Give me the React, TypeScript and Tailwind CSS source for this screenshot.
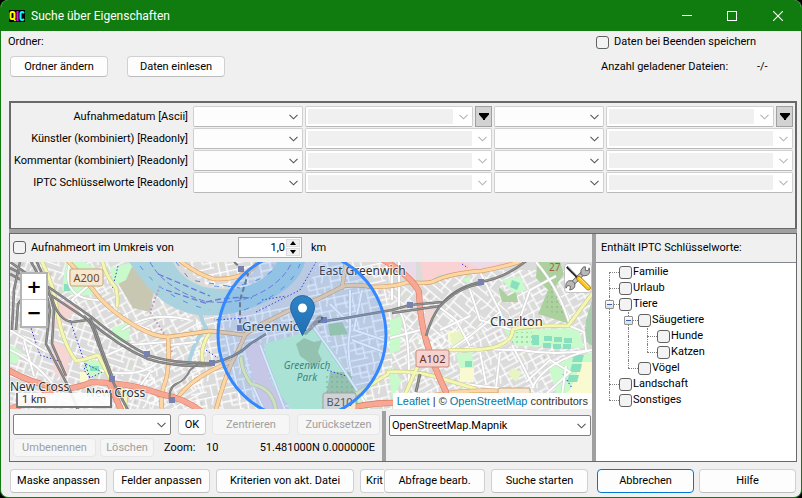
import type { ReactNode } from 'react';

const btn =
  'flex items-center justify-center rounded-[4px] border border-[#d0d0d0] border-b-[#bdbdbd] bg-[#fdfdfd] whitespace-nowrap';
const btnOff =
  'flex items-center justify-center rounded-[4px] border border-[#e6e6e6] bg-[#f6f6f6] text-[#a0a0a0] whitespace-nowrap';
const check =
  'size-[13px] shrink-0 appearance-none rounded-[3px] border border-[#626262] bg-[#f3f3f3]';

function Chevron({ muted = false }: { muted?: boolean }) {
  return (
    <svg
      viewBox="0 0 9 6"
      className="pointer-events-none absolute top-1/2 right-[4px] h-[6px] w-[9px] -translate-y-1/2"
      fill="none"
      stroke={muted ? '#b4b4b4' : '#555'}
      strokeWidth="1.1"
    >
      <path d="M.5 .8 4.5 4.8 8.5 .8" />
    </svg>
  );
}

function Combo({ label, muted = false }: { label: string; muted?: boolean }) {
  return (
    <div className="relative h-[21px] min-w-0 flex-1 overflow-hidden rounded-[2px] border border-[#d0d0d0] border-b-[#b8b8b8] bg-white">
      <select
        aria-label={label}
        disabled={muted}
        className={
          muted
            ? 'block size-full appearance-none border-2 border-r-[19px] border-white bg-[#f0f0f0] opacity-100'
            : 'block size-full appearance-none bg-[#fdfdfd]'
        }
      />
      <Chevron muted={muted} />
    </div>
  );
}

function DateButton({ label }: { label: string }) {
  return (
    <button
      aria-label={label}
      className="flex h-[21px] w-[17px] items-center justify-center border border-[#a0a0a0] bg-[#d2d2d2]"
    >
      <svg viewBox="0 0 10 7" className="h-[7px] w-[10px]">
        <path d="M0 0h10v1.500L6 6v1H4V6L0 1.500z" />
      </svg>
    </button>
  );
}

const fields = [
  'Aufnahmedatum [Ascii]',
  'Künstler (kombiniert) [Readonly]',
  'Kommentar (kombiniert) [Readonly]',
  'IPTC Schlüsselworte [Readonly]',
];

type Cell = 'first' | 'tee' | 'end' | 'line' | 'minus';
const tree: { name: string; cells: Cell[] }[] = [
  { name: 'Familie', cells: ['first'] },
  { name: 'Urlaub', cells: ['tee'] },
  { name: 'Tiere', cells: ['minus'] },
  { name: 'Säugetiere', cells: ['line', 'minus'] },
  { name: 'Hunde', cells: ['line', 'line', 'tee'] },
  { name: 'Katzen', cells: ['line', 'line', 'end'] },
  { name: 'Vögel', cells: ['line', 'end'] },
  { name: 'Landschaft', cells: ['tee'] },
  { name: 'Sonstiges', cells: ['end'] },
];

function TreeCell({ kind }: { kind: Cell }) {
  return (
    <span className="relative h-4 w-[19px] shrink-0">
      {kind !== 'first' && <i className="absolute top-0 left-[9px] h-2 border-l border-dotted border-[#808080]" />}
      {kind !== 'end' && <i className="absolute top-2 left-[9px] h-2 border-l border-dotted border-[#808080]" />}
      {kind !== 'line' && (
        <i className="absolute top-2 left-[9px] w-[10px] border-t border-dotted border-[#808080]" />
      )}
      {kind === 'minus' && (
        <button
          aria-label="Zuklappen"
          className="absolute top-[4px] left-[5px] flex size-[9px] items-center justify-center rounded-[1px] border border-[#919191] bg-linear-to-b from-white to-[#dcdcdc]"
        >
          <i className="h-px w-[5px] bg-[#3c5fb4]" />
        </button>
      )}
    </span>
  );
}

const rail = (d: string, w = 2.6) => (
  <g key={d} fill="none">
    <path d={d} stroke="#777" strokeWidth={w} />
    <path d={d} stroke="#b5b5b5" strokeWidth={w / 5} />
  </g>
);

function Roads({ paths, edge, fill, width }: { paths: string[]; edge: string; fill: string; width: number }) {
  return (
    <g fill="none" strokeLinecap="round" strokeLinejoin="round">
      {paths.map((d) => (
        <path key={'e' + d} d={d} stroke={edge} strokeWidth={width + 1.2} />
      ))}
      {paths.map((d) => (
        <path key={'f' + d} d={d} stroke={fill} strokeWidth={width} />
      ))}
    </g>
  );
}

function Streets({ id, angle, w, h }: { id: string; angle: number; w: number; h: number }) {
  return (
    <pattern id={id} width={w * 3} height={h * 3} patternUnits="userSpaceOnUse" patternTransform={`rotate(${angle})`}>
      <path
        d={`M0 .7H${w * 3}M0 ${h}H${w * 1.7}M${w} ${h * 1.6}H${w * 3}M0 ${h * 2.3}H${w * 2}M1 0V${h * 3}M${w} 0V${h * 1.6}M${w * 1.7} 0V${h * 2.3}M${w * 2.4} ${h * 1.6}V${h * 3}M${w * 2.5} 0l-3 ${h}`}
        stroke="#fff"
        strokeWidth="1.300"
        fill="none"
      />
      <rect x={w * 1.2} y={h * 0.4} width="2" height="2.500" fill="#d4c6c0" />
      <rect x={w * 2.6} y={h * 2} width="3" height="2" fill="#cfe6c0" />
    </pattern>
  );
}

const majorRoads = [
  'M66 259Q82 275 90 286Q108 311 137 327Q155 337 168 337L210 331Q230 333 244 335L262 324L292 309L318 299L344 286Q360 284 372 287Q396 287 408 282Q422 284 432 282Q450 273 482 271Q508 266 528 259',
  'M168 337Q170 362 166 380Q160 394 162 410',
  'M245 335Q238 352 232 362Q224 380 216 410',
  'M178 259Q196 274 214 279Q246 280 258 262',
  'M176 400Q190 378 230 362',
  'M342 288L346 262',
  'M430 396Q470 388 520 392L534 410',
];
const yellowRoads = [
  'M40 258Q54 284 57 310Q62 342 76 361Q84 360 98 355L112 382L124 392Q128 402 122 412',
  'M102 258Q104 274 116 288Q118 298 117 306',
  'M418 366Q410 382 398 412M388 372Q420 370 450 381L476 389',
  'M450 350Q492 351 502 344Q512 340 513 329Q530 325 568 326L592 294',
  'M210 332Q198 350 204 366',
  'M241 358Q242 372 251 384Q274 388 276 412',
  'M340 404Q372 384 388 374',
];
const redRoads = [
  'M8 370Q28 382 60 389Q76 389 92 382Q132 383 160 394Q184 398 202 412',
  'M8 410Q30 402 50 392',
  'M110 385L122 412',
  'M380 258Q412 276 419 292Q420 320 426 340Q434 368 446 392',
  'M336 412Q366 402 398 403',
];
const localRoads = [
  'M70 262Q60 300 100 300Q120 320 150 330',
  'M88 286L72 300L84 316M96 360L130 345L166 342M100 370Q140 380 160 360',
  'M122 330Q150 310 190 320M170 345L196 342M130 400L150 372',
  'M312 325Q330 350 345 372L370 410M350 290V330Q346 352 352 374',
  'M362 290L354 330L384 340M330 304L348 322M352 340L384 352',
  'M392 262V300M399 262V310Q412 330 408 410M390 338L420 330',
  'M480 272L500 312L506 328M512 345L520 360L534 388M450 350L470 336L500 312',
  'M430 300L456 320L470 346M470 290L480 320L512 330M440 330L470 316',
  'M470 348Q500 350 520 350Q556 356 592 350M532 388Q546 360 592 350',
  'M536 262Q560 290 570 326L584 332L586 350M556 276L530 290L520 318',
  'M430 352L436 380L480 386L530 392M480 352L486 384M500 352L496 388',
  'M526 382L550 360L570 372L545 395L526 410M560 410L566 366',
  'M260 345L285 410M236 350L264 410M226 336L240 400',
  'M10 350Q40 364 60 394M24 340L34 376M10 330L46 352',
];
const stations = [
  [147, 354], [112, 379], [172, 400], [241, 269], [240, 328], [212, 363], [324, 320], [410, 305], [481, 282],
];
const lawns = [
  'M66 262H84L102 272L94 284L98 294L76 296L62 290Z',
  'M110 268L134 262L126 280L114 286Z',
  'M84 362L102 358L104 374L86 376Z',
  'M112 328L128 322L130 340L114 342Z',
  'M10 345L22 352L16 364L10 362Z',
  'M502 280L520 276L526 290L514 294Z',
  'M504 330L578 328L584 348L516 346Z',
  'M548 366L592 352V404L562 410Z',
  'M456 354L472 352L474 370L460 368Z',
  'M390 320L402 316L400 350L390 354Z',
  'M388 366L402 380L392 400Z',
  'M462 280L470 276L470 284Z',
  'M264 344L313 330L326 340L350 376L372 410H292L272 384Z',
];
const pitches = [
  'M64 284h6v7h-6z', 'M90 366h9v5h-9z', 'M512 280l8 3-3 7-7-3z', 'M532 335h7v10h-7z',
  'M544 336h8v5h-8zM554 337h8v5h-8zM564 338h8v5h-8zM543 343h8v5h-8zM553 344h8v5h-8zM563 344h8v5h-8z',
  'M574 355h10l-2 7h-10zM572 364h10l-2 8h-10zM569 375h10l-2 7h-10z', 'M465 361h7v6h-7z',
];

function MapLabel({ x, y, size = 13, children }: { x: number; y: number; size?: number; children: ReactNode }) {
  return (
    <text x={x} y={y} fontSize={size} fill="#333" stroke="#fff" strokeOpacity=".7" strokeWidth="2" paintOrder="stroke">
      {children}
    </text>
  );
}

function Shield({ x, y, text, red = false }: { x: number; y: number; text: string; red?: boolean }) {
  return (
    <g>
      <rect
        x={x}
        y={y}
        width="33"
        height="17"
        rx="2"
        fill={red ? '#f6d3cd' : '#f6e7d0'}
        stroke={red ? '#c98b80' : '#c9a57c'}
      />
      <text x={x + 16.5} y={y + 12.5} fontSize="11" textAnchor="middle" fill={red ? '#70342a' : '#6d4a22'}>
        {text}
      </text>
    </g>
  );
}

function CityMap() {
  return (
    <svg
      viewBox="10 262 582 147"
      preserveAspectRatio="xMidYMid slice"
      className="block size-full font-['Noto_Sans',sans-serif]"
      role="img"
      aria-label="Karte von Greenwich"
    >
      <defs>
        <Streets id="streetsA" angle={-28} w={10} h={7} />
        <Streets id="streetsB" angle={18} w={10} h={8} />
        <Streets id="streetsC" angle={-12} w={11} h={8} />
        <Streets id="streetsD" angle={40} w={12} h={9} />
        <pattern id="trees" width="5" height="5" patternUnits="userSpaceOnUse">
          <circle cx="2" cy="2" r=".8" fill="#7fae74" />
        </pattern>
        <linearGradient id="pin" x1="0" y1="0" x2="0" y2="1">
          <stop offset="0" stopColor="#2f84c6" />
          <stop offset="1" stopColor="#1f6fb3" />
        </linearGradient>
      </defs>
      <rect x="10" y="262" width="582" height="147" fill="#dcdbdb" />
      <path d="M10 262H70L60 300L150 350L160 410H10Z" fill="url(#streetsB)" />
      <path d="M70 262H130L210 330L200 410H150L140 350L60 300Z" fill="url(#streetsA)" />
      <path d="M196 320L300 300L320 262H392V410H190Z" fill="url(#streetsC)" />
      <path d="M386 286L500 270L510 320L450 350L400 340Z" fill="url(#streetsD)" />
      <path d="M392 340L510 320L500 270H592V410H392Z" fill="url(#streetsA)" />
      <path d="M176 262H280L262 280L240 289L208 286Z" fill="url(#streetsC)" />

      <path d="M116 280L131 266L155 285L150 312L133 308Z" fill="#c7c7b2" />
      <path d="M58 300L84 308L96 300L70 316L54 330ZM52 340L70 350L66 382L54 372Z" fill="#f7d5d2" />
      <path d="M420 262H520L476 271L440 274L424 284Z" fill="#fad2d3" />
      <path d="M462 262H506L480 268ZM400 262H416V280L404 272Z" fill="#ebdbe8" />
      <path d="M426 308L438 310L428 330L424 320Z" fill="#f2d8d5" />
      <path d="M245 346L262 342L270 380L286 410H262Z" fill="#ecd6e2" />
      <g fill="#c8facc">
        {lawns.map((d) => (
          <path key={d} d={d} />
        ))}
      </g>
      <path d="M582 362H592V410H556Q558 398 570 390ZM460 368H474V382H460ZM80 372H88V382H80ZM448 332H458V342H448Z" fill="#f9f9d2" />
      <path d="M450 334L464 330L464 342L452 346ZM512 368L522 372L516 382L508 374Z" fill="#e6f5c3" />
      <path d="M586 320L592 300V346L584 340Z" fill="#a9cfae" />
      <path
        d="M537 262H560L564 274L553 290L570 324L538 314L548 290L536 278ZM498 286L508 296L516 292L518 302L502 302ZM296 344L304 338L314 342L322 340L318 352L322 360L314 366L300 356ZM328 324L342 322L348 334L330 336ZM330 372L350 372L360 410H324Z"
        fill="#add19e"
      />
      <path d="M324 376H352L358 410H322ZM512 332H532V346H512ZM548 286L556 284L566 318L546 310Z" fill="url(#trees)" />
      <g fill="#88e0be">
        {pitches.map((d) => (
          <path key={d} d={d} />
        ))}
      </g>

      <path
        d="M129 262H173Q182 280 204 287Q240 294 262 279Q272 272 277 262H305Q300 282 274 297Q246 314 216 315Q188 318 164 302Q146 288 129 262Z"
        fill="#aad3df"
      />
      <path d="M198 306Q202 322 206 328Q194 340 188 366" fill="none" stroke="#aad3df" strokeWidth="4" />
      <g fill="none" stroke="#6d78d8" strokeWidth="1" strokeDasharray="6 3">
        <path d="M150 262Q164 288 204 301Q236 306 262 292Q284 280 292 262" />
        <path d="M158 274L210 296M166 290L208 304M206 302Q230 296 252 298" strokeWidth="1.300" />
      </g>
      <g fill="none" stroke="#4f8fea" strokeWidth="1" strokeDasharray="5 9">
        <path d="M140 266Q166 300 210 310M176 262L190 280L240 288M214 286Q250 290 276 268M244 310Q290 292 300 264" />
      </g>
      <g fill="none" stroke="#3333dd" strokeWidth="1" strokeDasharray="1.5 2">
        <path d="M30 325L40 355L62 362M70 320L92 384M86 364L102 372L90 378L84 370ZM118 266L112 290M256 312L300 290L316 262M246 318L214 320M262 300L286 296M327 370L346 376M563 374L572 388M462 264L468 268M206 350L218 358" />
      </g>
      <path d="M160 286L150 312L168 340L172 352" fill="none" stroke="#b7a1bd" strokeWidth="2" strokeDasharray="2 2" />

      <g fill="none" stroke="#cdcdcd" strokeWidth="3">
        {localRoads.map((d) => (
          <path key={d} d={d} />
        ))}
      </g>
      <g fill="none" stroke="#fff" strokeWidth="2">
        {localRoads.map((d) => (
          <path key={d} d={d} />
        ))}
      </g>
      <Roads paths={yellowRoads} edge="#c9ca82" fill="#f4f7b4" width={3} />
      <Roads paths={majorRoads} edge="#d5a066" fill="#fcd6a4" width={3.2} />
      <Roads paths={redRoads} edge="#dd7a66" fill="#f7a894" width={5} />

      {[
        'M10 268L50 288L90 316Q124 344 150 356Q176 364 212 363Q236 358 250 344L266 334',
        'M10 274L52 296L88 320Q118 346 148 359Q176 368 212 365',
        'M30 260Q46 286 50 310L46 344L68 386L78 410',
        'M36 260Q50 290 54 310L52 344L66 376',
        'M20 262L14 290L12 330M10 262L36 280L18 304L16 330',
        'M52 298Q58 320 72 322L88 320',
        'M84 316Q92 322 96 338L112 380L128 410',
        'M90 318Q96 330 102 350L112 376',
        'M318 322L346 318L392 310L410 305L442 302',
        'M392 313L440 306Q454 288 480 282Q506 278 530 258',
        'M426 336Q432 316 440 306Q460 286 482 284',
      ].map((d) => rail(d))}
      {rail('M170 402Q168 388 176 384Q186 380 190 370L200 362', 2)}
      {rail('M420 374L416 392', 3)}
      <path d="M234 262L248 274L240 300V330" fill="none" stroke="#777" strokeWidth="2" strokeDasharray="5 3" />
      <g fill="#7981b0">
        {stations.map(([x, y]) => (
          <rect key={`${x}-${y}`} x={x - 3} y={y - 3} width="6" height="6" />
        ))}
      </g>

      <MapLabel x={10} y={391} size={12}>New Cross</MapLabel>
      <MapLabel x={86} y={397} size={12}>New Cross</MapLabel>
      <MapLabel x={242} y={331}>Greenwich</MapLabel>
      <MapLabel x={319} y={275} size={12}>East Greenwich</MapLabel>
      <MapLabel x={490} y={326}>Charlton</MapLabel>
      <g fontSize="10" fontStyle="italic" fill="#3c8560" textAnchor="middle">
        <text x="307" y="369">Greenwich</text>
        <text x="307" y="381">Park</text>
      </g>
      <text x="549" y="271" fontSize="10" fill="#a06048">27</text>
      <Shield x={70} y={269} text="A200" />
      <Shield x={416} y={350} text="A102" red />
      <Shield x={323} y={393} text="B210" />
      <rect x="498" y="388" width="32" height="8" rx="2" fill="#f6e7d0" stroke="#c9a57c" />

      <circle cx="302" cy="335" r="84" fill="#38f" fillOpacity=".2" stroke="#38f" strokeWidth="3" />
      <path d="M303 334L318 316Q326 314 322 320L306 335Z" fill="#000" opacity=".25" />
      <path
        d="M302.500 335.500L292.500 315Q290.500 311 290.500 307.500A12 12 0 0 1 314.500 307.500Q314.500 311 312.500 315Z"
        fill="url(#pin)"
        stroke="#2568a5"
      />
      <circle cx="302.500" cy="308" r="4.500" fill="#fff" />
    </svg>
  );
}

function ToolsIcon() {
  return (
    <svg viewBox="0 0 28 28" className="size-[26px] shrink-0">
      <path d="M6 22L20 8" stroke="#555" strokeWidth="5" />
      <path d="M6 22L20 8" stroke="#c4c4c4" strokeWidth="3.400" />
      <path
        d="M17 10Q16 5 20 2L22 2L22 6L25 6L26 3Q28 9 24 11Q20 13 17 10ZM10 19Q12 24 8 26L5 27L6 23L3 22L1 25Q0 19 4 17Q8 16 10 19Z"
        fill="#b8b8b8"
        stroke="#555"
        strokeWidth=".9"
      />
      <path d="M2 2L15 15" stroke="#222" strokeWidth="2.400" />
      <path d="M3 2L15 14" stroke="#ccc" strokeWidth=".6" />
      <path d="M15 14.500L25 24.500" stroke="#b07800" strokeWidth="5.500" strokeLinecap="round" />
      <path d="M15 14.500L25 24.500" stroke="#ffc61e" strokeWidth="4" strokeLinecap="round" />
      <path d="M16 14L25.500 23.500" stroke="#fff0a0" strokeWidth="1" />
    </svg>
  );
}

export default function App() {
  return (
    <div className="min-h-screen w-full bg-black font-['Roboto','Liberation_Sans',sans-serif] text-[11px] leading-[14px] text-black">
      <div className="flex min-h-screen flex-col overflow-hidden rounded-[8px] border-x border-b border-[#107c10] bg-[#f0f0f0]">
        <header className="flex h-[31px] items-center bg-[#107c10] pl-2 text-white">
          <svg viewBox="0 0 16 12" className="h-[12px] w-[16px]" fill="none" strokeWidth="2" role="img" aria-label="QIC">
            <rect width="16" height="12" fill="#000" />
            <rect x="1.500" y="2" width="4" height="7" rx="1.500" stroke="#ff0" />
            <path d="M4 8L6.500 11" stroke="#ff0" strokeWidth="1.500" />
            <path d="M8.500 1V11" stroke="#f0f" />
            <path d="M15 3Q14 2 13 2Q11.500 2 11.500 4V8Q11.500 10 13 10Q14 10 15 9" stroke="#0ff" />
          </svg>
          <h1 className="ml-[6px] flex-1 text-[12px]">Suche über Eigenschaften</h1>
          <button aria-label="Minimieren" className="flex h-full w-[45px] items-center justify-center">
            <i className="h-px w-[10px] bg-white" />
          </button>
          <button aria-label="Maximieren" className="flex h-full w-[46px] items-center justify-center">
            <i className="size-[10px] border border-white" />
          </button>
          <button aria-label="Schließen" className="flex h-full w-[46px] items-center justify-center">
            <svg viewBox="0 0 10 10" className="size-[10px]" stroke="#fff" strokeWidth="1.100">
              <path d="M0 0 10 10M10 0 0 10" />
            </svg>
          </button>
        </header>

        <main className="flex flex-1 flex-col pr-1 pl-2">
          <section className="flex h-[70px] justify-between pt-1">
            <div>
              <p className="-ml-px">Ordner:</p>
              <div className="mt-[7px] ml-px flex gap-[19px]">
                <button className={`${btn} h-[21px] w-[98px]`}>Ordner ändern</button>
                <button className={`${btn} h-[21px] w-[98px]`}>Daten einlesen</button>
              </div>
            </div>
            <div className="w-[201px]">
              <label className="flex items-center gap-[5px]">
                <input type="checkbox" className={check} />
                Daten bei Beenden speichern
              </label>
              <p className="mt-[11px] ml-[5px] flex">
                <span className="w-[156px]">Anzahl geladener Dateien:</span>
                <span>-/-</span>
              </p>
            </div>
          </section>

          <section className="h-[128px] border-2 border-b border-[#696969] pt-[3px] pr-[2px]">
            <div className="flex flex-col gap-px">
              {fields.map((name, i) => (
                <div key={name} className="grid grid-cols-[180px_110px_1fr_110px_1fr] items-center gap-x-[2px]">
                  <span className="pr-[3px] text-right whitespace-nowrap">{name}</span>
                  <Combo label={`${name} Operator 1`} />
                  <div className="flex gap-[2px]">
                    <Combo label={`${name} Wert 1`} muted />
                    {i === 0 && <DateButton label="Datum 1 wählen" />}
                  </div>
                  <Combo label={`${name} Operator 2`} />
                  <div className="flex gap-[2px]">
                    <Combo label={`${name} Wert 2`} muted />
                    {i === 0 && <DateButton label="Datum 2 wählen" />}
                  </div>
                </div>
              ))}
            </div>
          </section>
          <div className="h-1 bg-[#a0a0a0]" />

          <section className="flex border border-[#696969]">
            <div className="min-w-0 flex-1">
              <div className="flex h-[28px] items-center pb-px pl-[3px]">
                <label className="flex w-[225px] items-center gap-[5px]">
                  <input type="checkbox" className={check} />
                  Aufnahmeort im Umkreis von
                </label>
                <div className="flex h-[21px] w-[64px] border border-[#aaa] bg-white">
                  <input
                    aria-label="Umkreis in km"
                    defaultValue="1,0"
                    className="w-[46px] bg-transparent text-right outline-none"
                  />
                  <div className="ml-px flex w-[14px] flex-col gap-px py-px">
                    {['Erhöhen', 'Verringern'].map((t, i) => (
                      <button
                        key={t}
                        aria-label={t}
                        className="flex flex-1 items-center justify-center border border-[#ddd] bg-[#f0f0f0]"
                      >
                        <svg viewBox="0 0 6 4" className="h-[4px] w-[6px]">
                          <path d={i ? 'M0 0H6L3 4Z' : 'M0 4H6L3 0Z'} />
                        </svg>
                      </button>
                    ))}
                  </div>
                </div>
                <span className="ml-[9px]">km</span>
              </div>

              <div className="relative h-[147px] overflow-hidden">
                <CityMap />
                <div className="absolute top-[10px] left-[10px] flex w-[28px] flex-col border-2 border-[#b4b4b4] bg-white font-['DejaVu_Sans',sans-serif] text-[18px] leading-none font-bold">
                  <button aria-label="Vergrößern" className="flex h-[26px] items-center justify-center border-b border-[#ccc]">
                    +
                  </button>
                  <button aria-label="Verkleinern" className="flex h-[26px] items-center justify-center">
                    −
                  </button>
                </div>
                <button
                  aria-label="Werkzeuge"
                  className="absolute top-[1px] right-0 flex h-[30px] w-[28px] items-center justify-center rounded-[4px] border border-[#c4c4c4] bg-white"
                >
                  <ToolsIcon />
                </button>
                <div className="absolute bottom-[1px] left-[6px] h-[15px] w-[96px] border-2 border-t-0 border-[#777] bg-white/90 pl-1 leading-[14px] text-[#333]">
                  1 km
                </div>
                <div className="absolute right-0 bottom-0 bg-white/95 px-[4px] font-['Liberation_Sans',sans-serif] leading-[16px] whitespace-nowrap text-[#333]">
                  <a href="#leaflet" className="text-[#0078a8]">Leaflet</a> | ©{' '}
                  <a href="#osm" className="text-[#0078a8]">OpenStreetMap</a> contributors
                </div>
              </div>

              <div className="flex h-[52px]">
                <div className="w-[372px] pt-[5px] pl-[3px]">
                  <div className="flex">
                    <div className="relative h-[21px] w-[158px] rounded-[2px] border border-[#808080] bg-white">
                      <select aria-label="Gespeicherter Ort" className="block size-full appearance-none" />
                      <Chevron />
                    </div>
                    <button className={`${btn} ml-[7px] h-[21px] w-[28px]`}>OK</button>
                    <button disabled className={`${btnOff} ml-[6px] h-[21px] w-[78px]`}>Zentrieren</button>
                    <button disabled className={`${btnOff} ml-[7px] h-[21px] w-[83px]`}>Zurücksetzen</button>
                  </div>
                  <div className="mt-[3px] flex items-center">
                    <button disabled className={`${btnOff} h-[19px] w-[83px]`}>Umbenennen</button>
                    <button disabled className={`${btnOff} ml-1 h-[19px] w-[54px]`}>Löschen</button>
                    <span className="ml-[10px] w-[42px]">Zoom:</span>
                    <span className="w-[40px]">10</span>
                    <span className="flex-1 pr-[7px] text-right whitespace-nowrap">51.481000N 0.000000E</span>
                  </div>
                </div>
                <div className="mt-[2px] w-1 bg-[#a0a0a0]" />
                <div className="flex-1 pt-[6px] pr-px pl-[3px]">
                  <div className="relative h-[21px] rounded-[2px] border border-[#808080] bg-white">
                    <select aria-label="Kartenquelle" className="block size-full appearance-none pl-[2px]">
                      <option>OpenStreetMap.Mapnik</option>
                    </select>
                    <Chevron />
                  </div>
                </div>
              </div>
            </div>

            <div className="w-1 shrink-0 bg-[#a0a0a0]" />

            <div className="flex w-[200px] shrink-0 flex-col">
              <h2 className="flex h-[28px] items-center pb-px pl-[5px]">Enthält IPTC Schlüsselworte:</h2>
              <ul className="flex-1 border-t border-[#828790] bg-white pt-px pl-1">
                {tree.map((node) => (
                  <li key={node.name} className="flex h-4 items-center">
                    {node.cells.map((kind, i) => (
                      <TreeCell key={i} kind={kind} />
                    ))}
                    <label className="flex items-center gap-px">
                      <input type="checkbox" className={check} />
                      {node.name}
                    </label>
                  </li>
                ))}
              </ul>
            </div>
          </section>

          <footer className="flex pt-[7px] pr-px pb-1 pl-px">
            <button className={`${btn} h-[24px] w-[97px]`}>Maske anpassen</button>
            <button className={`${btn} ml-[6px] h-[24px] w-[97px]`}>Felder anpassen</button>
            <button className={`${btn} ml-[6px] h-[24px] w-[138px]`}>Kriterien von akt. Datei</button>
            <button className="ml-[6px] h-[24px] w-[24px] rounded-l-[4px] border border-r-0 border-[#d0d0d0] bg-[#fdfdfd] pl-[5px] text-left">
              Krit
            </button>
            <button className={`${btn} h-[24px] w-[101px]`}>Abfrage bearb.</button>
            <button className={`${btn} ml-[6px] h-[24px] w-[97px]`}>Suche starten</button>
            <button className="ml-auto flex h-[24px] w-[97px] items-center justify-center rounded-[4px] border border-[#0078d4] bg-[#fdfdfd]">
              Abbrechen
            </button>
            <button className={`${btn} ml-[5px] h-[24px] w-[97px]`}>Hilfe</button>
          </footer>
        </main>
      </div>
    </div>
  );
}
